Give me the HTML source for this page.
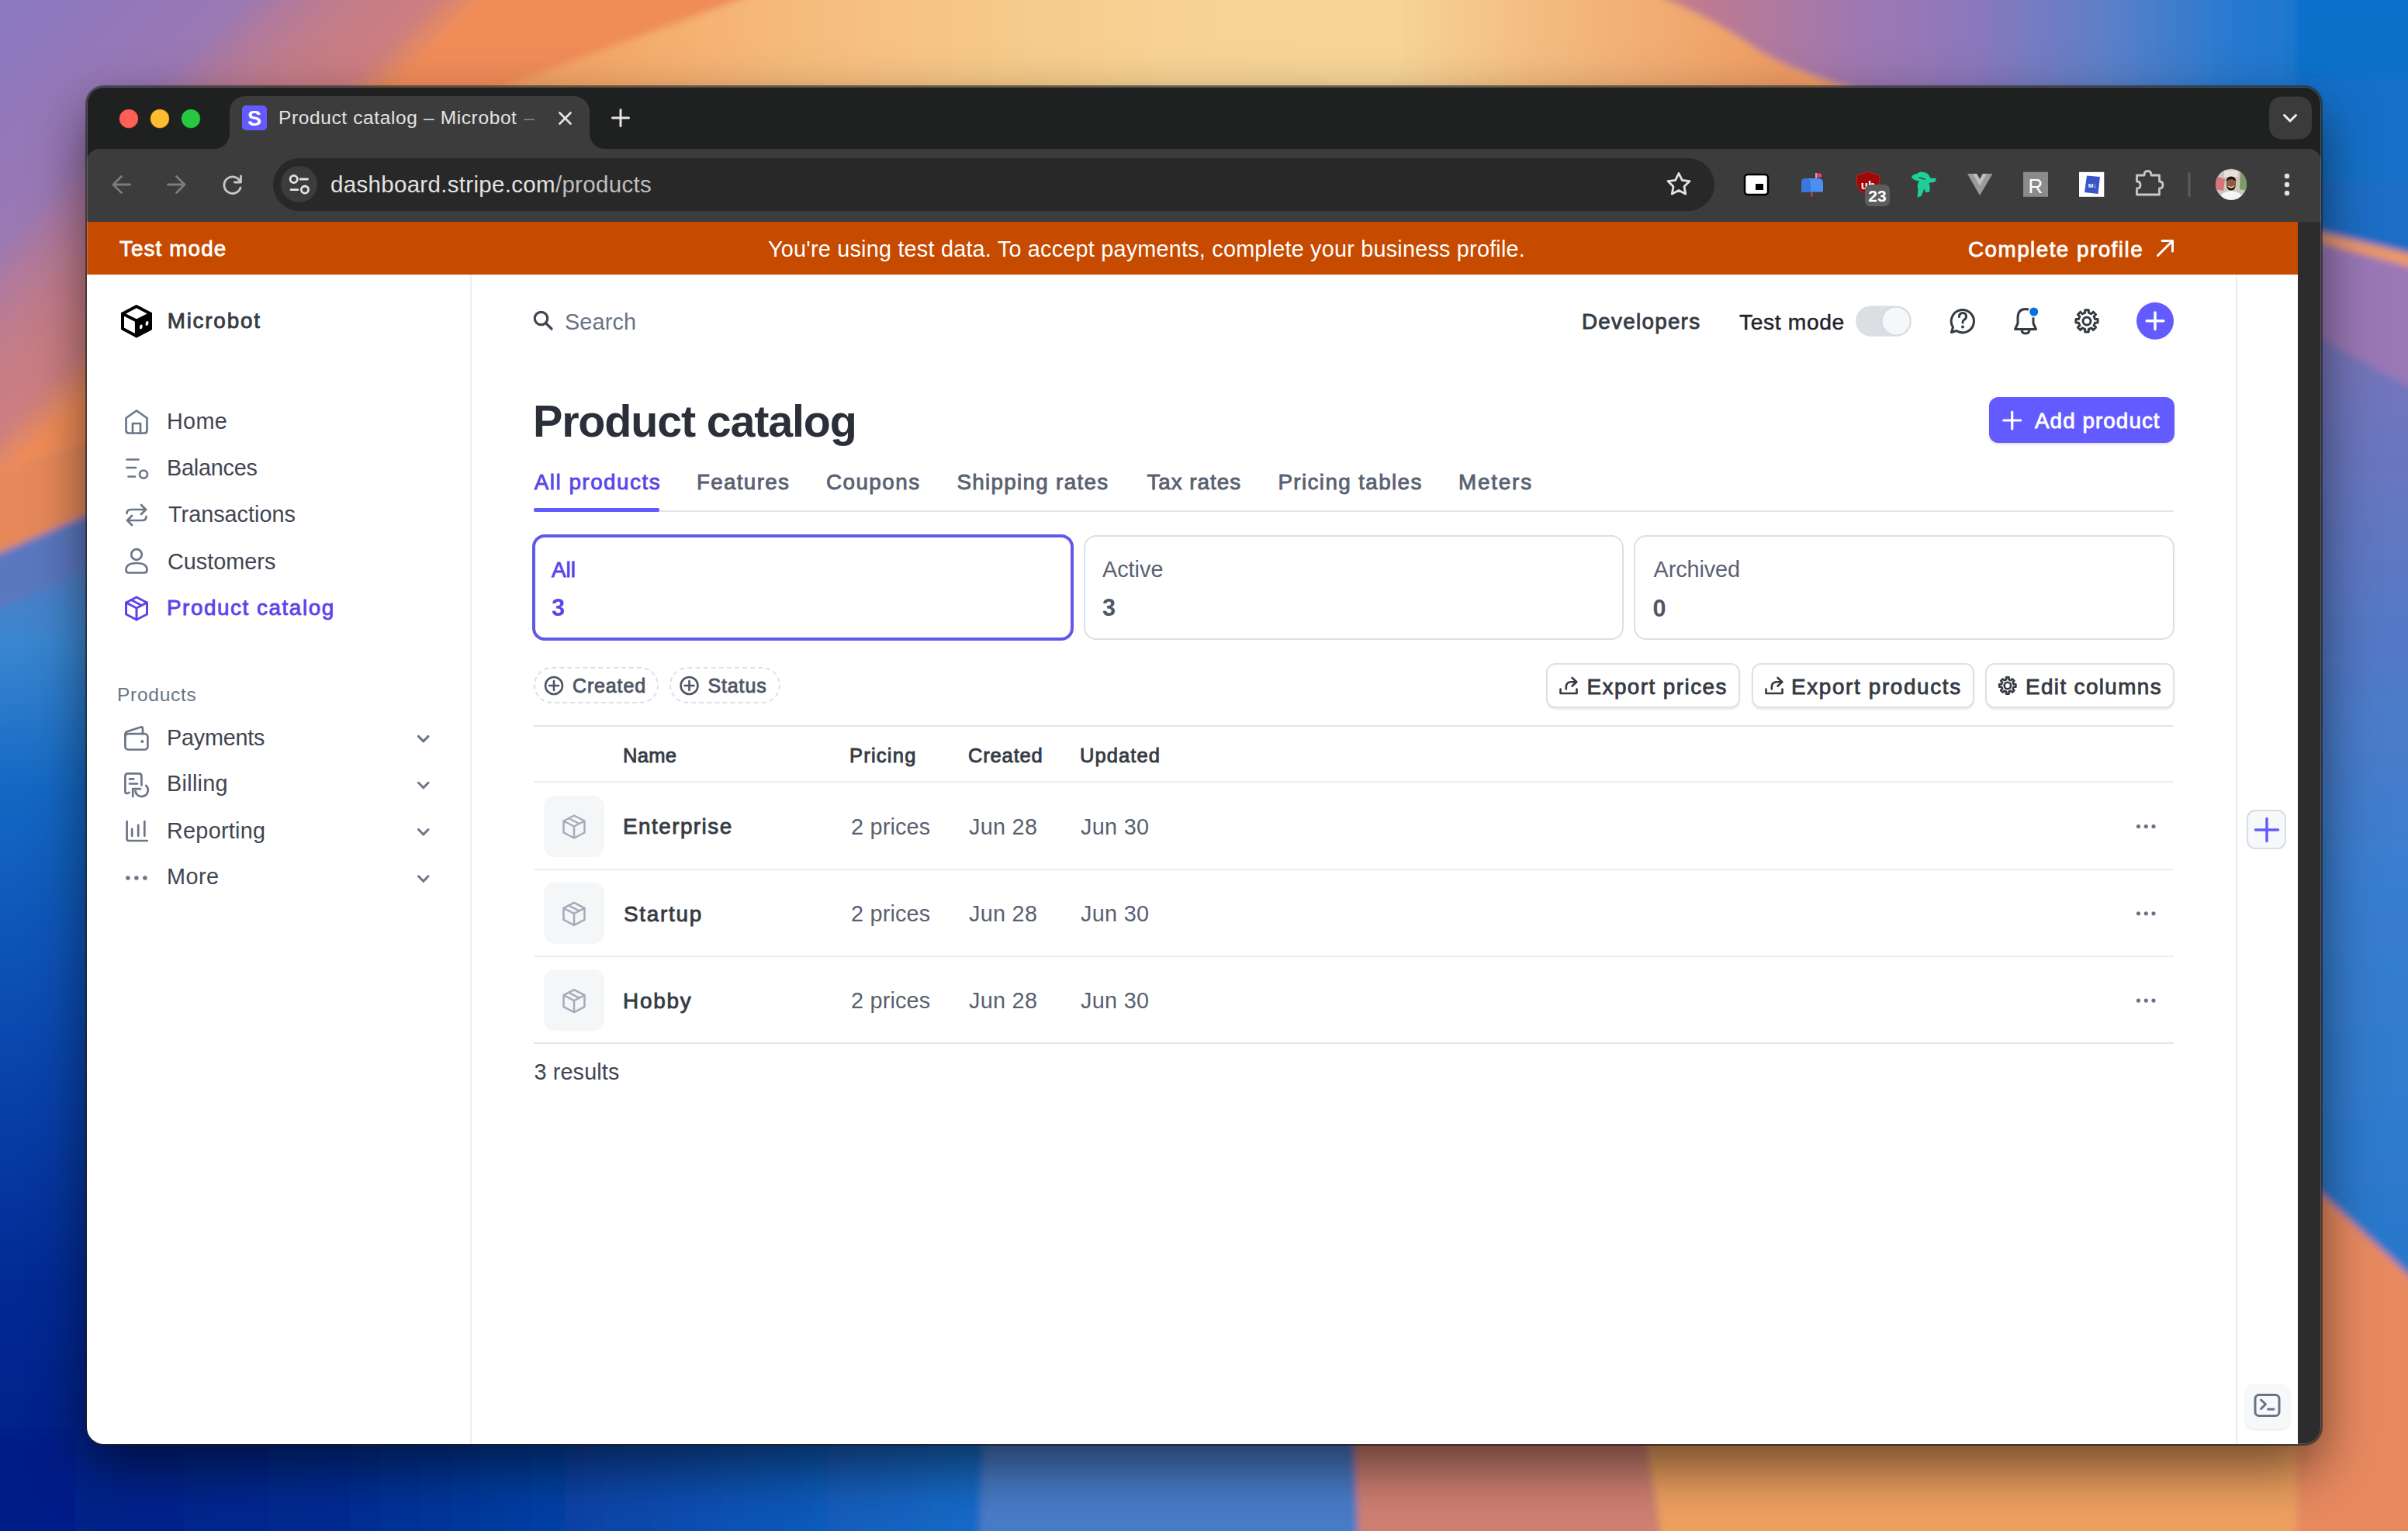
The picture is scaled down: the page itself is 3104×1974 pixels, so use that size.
<!DOCTYPE html>
<html><head><meta charset="utf-8"><title>Product catalog – Microbot</title>
<style>
html,body{margin:0;padding:0;width:3104px;height:1974px;overflow:hidden;font-family:"Liberation Sans",sans-serif;}
body{position:relative;background:#1a50b0;}
.a{position:absolute;}
.t{position:absolute;white-space:nowrap;line-height:1;font-family:"Liberation Sans",sans-serif;}
svg{position:absolute;overflow:visible;}
</style></head><body>
<!-- wallpaper -->
<svg width="3104" height="1974" viewBox="0 0 3104 1974" style="left:0;top:0;">
<defs>
 <linearGradient id="gTop" x1="0" y1="0" x2="2300" y2="0" gradientUnits="userSpaceOnUse">
  <stop offset="0" stop-color="#8878c0"/><stop offset="0.26" stop-color="#f29c62"/><stop offset="0.35" stop-color="#f4aa6c"/>
  <stop offset="0.45" stop-color="#f5bc7c"/><stop offset="0.55" stop-color="#f6c888"/><stop offset="0.65" stop-color="#f7d294"/>
  <stop offset="0.78" stop-color="#f7d598"/><stop offset="0.86" stop-color="#f4bc80"/><stop offset="1" stop-color="#ee9c62"/>
 </linearGradient>
 <linearGradient id="gTopR" x1="2150" y1="0" x2="3104" y2="0" gradientUnits="userSpaceOnUse">
  <stop offset="0" stop-color="#c47a88"/><stop offset="0.25" stop-color="#a078b0"/><stop offset="0.42" stop-color="#8a78bc"/>
  <stop offset="0.6" stop-color="#5a80c8"/><stop offset="0.75" stop-color="#2a7ad0"/><stop offset="1" stop-color="#0a70cc"/>
 </linearGradient>
 <linearGradient id="gLeftBlue" x1="0" y1="700" x2="0" y2="1974" gradientUnits="userSpaceOnUse">
  <stop offset="0" stop-color="#5a7cc4"/><stop offset="0.1" stop-color="#3a86d0"/><stop offset="0.25" stop-color="#1468c4"/>
  <stop offset="0.5" stop-color="#0a48b0"/><stop offset="0.75" stop-color="#022a94"/><stop offset="1" stop-color="#001c84"/>
 </linearGradient>
 <linearGradient id="gBot" x1="0" y1="0" x2="1270" y2="0" gradientUnits="userSpaceOnUse">
  <stop offset="0" stop-color="#001c86"/><stop offset="0.35" stop-color="#002c92"/><stop offset="0.7" stop-color="#0a4eb0"/><stop offset="1" stop-color="#1a6cc8"/>
 </linearGradient>
 <linearGradient id="gRightBlue" x1="0" y1="400" x2="0" y2="1600" gradientUnits="userSpaceOnUse">
  <stop offset="0" stop-color="#7a74b8"/><stop offset="0.3" stop-color="#5a78c4"/><stop offset="0.6" stop-color="#3a7ed0"/><stop offset="1" stop-color="#2a78cc"/>
 </linearGradient>
 <linearGradient id="gTL" x1="0" y1="0" x2="310" y2="310" gradientUnits="userSpaceOnUse">
  <stop offset="0" stop-color="#8a78c0"/><stop offset="0.5" stop-color="#9a78b4"/><stop offset="0.62" stop-color="#b47a9a"/>
  <stop offset="0.75" stop-color="#c47c88"/><stop offset="0.9" stop-color="#cc7e80"/><stop offset="0.96" stop-color="#e08868"/><stop offset="1" stop-color="#f08c58"/>
 </linearGradient>
 <linearGradient id="gRT" x1="0" y1="0" x2="0" y2="330" gradientUnits="userSpaceOnUse">
  <stop offset="0" stop-color="#0a70cc"/><stop offset="0.5" stop-color="#1670c8"/><stop offset="1" stop-color="#1e6cc4"/>
 </linearGradient>
 <filter id="soft" x="-2%" y="-2%" width="104%" height="104%"><feGaussianBlur stdDeviation="5"/></filter>
</defs>
<rect x="0" y="0" width="3104" height="1974" fill="url(#gLeftBlue)"/>
<g filter="url(#soft)">
<!-- top -->
<rect x="-40" y="-40" width="3184" height="170" fill="url(#gTop)"/>
<path d="M2100 -40 H3144 V130 H2440 Q2300 90 2260 60 Q2200 20 2150 0 Q2120 -20 2100 -40 Z" fill="url(#gTopR)"/>
<!-- left band -->
<path d="M-40 -40 H1060 L600 130 H140 V562 L-40 622 Z" fill="url(#gTL)"/>
<path d="M-40 622 L140 562 V652 L-40 730 Z" fill="#e6885a"/>
<path d="M-40 730 L140 652 V720 L-40 805 Z" fill="#5a78c0"/>
<!-- right band -->
<path d="M2960 -40 H3144 V340 L2960 292 Z" fill="url(#gRT)"/>
<path d="M2960 292 L3144 336 V354 L2960 305 Z" fill="#f09a60"/>
<path d="M2960 305 L3144 354 V520 L2960 420 Z" fill="#9a78b6"/>
<path d="M2960 420 L3144 520 V1680 L2960 1509 Z" fill="url(#gRightBlue)"/>
<path d="M2960 1509 L3144 1680 V2014 H2960 Z" fill="#e88a60"/>
<!-- bottom band -->
<path d="M-40 1850 H1268 L1260 2014 H-40 Z" fill="url(#gBot)"/>
<path d="M1268 1850 H1745 L1752 2014 H1260 Z" fill="#4a7cc8"/>
<path d="M1745 1850 H2120 L2146 2014 H1752 Z" fill="#d08072"/>
<path d="M2120 1850 H2960 V2014 H2146 Z" fill="#eea060"/>
</g>
</svg>

<!-- window -->
<div class="a" style="left:112px;top:112px;width:2880px;height:1750px;border-radius:22px;box-shadow:0 30px 70px rgba(0,0,0,0.55),0 0 0 2px rgba(40,40,40,0.6);background:#2c2c2c;overflow:hidden;">
  <!-- tab strip -->
  <div class="a" style="left:0;top:0;width:2880px;height:110px;background:#1f2020;"></div>
  <!-- toolbar -->
  <div class="a" style="left:0;top:80px;width:2880px;height:94px;background:#3c3c3c;border-radius:16px 16px 0 0;"></div>
  <!-- active tab flares -->
  <div class="a" style="left:164px;top:60px;width:20px;height:20px;background:#3c3c3c;"></div>
  <div class="a" style="left:144px;top:40px;width:40px;height:40px;background:#1f2020;border-radius:0 0 20px 0;"></div>
  <div class="a" style="left:648px;top:60px;width:20px;height:20px;background:#3c3c3c;"></div>
  <div class="a" style="left:648px;top:40px;width:40px;height:40px;background:#1f2020;border-radius:0 0 0 20px;"></div>
  <!-- active tab -->
  <div class="a" style="left:184px;top:12px;width:464px;height:80px;background:#3c3c3c;border-radius:20px 20px 0 0;"></div>
  <!-- banner -->
  <div class="a" style="left:0;top:174px;width:2850px;height:68px;background:#c64a00;"></div>
  <!-- page -->
  <div class="a" style="left:0;top:242px;width:2850px;height:1508px;background:#ffffff;"></div>
  <!-- dark right strip -->
  <div class="a" style="left:2850px;top:174px;width:30px;height:1576px;background:#2c2c2c;"></div>
</div>
<div class="a" style="left:112px;top:112px;width:2880px;height:1750px;box-sizing:border-box;border-radius:22px;border:1px solid rgba(255,255,255,0.22);pointer-events:none;"></div>
<!-- omnibox -->
<div class="a" style="left:352px;top:204px;width:1858px;height:68px;border-radius:34px;background:#282828;"></div>
<div class="a" style="left:362px;top:214px;width:47px;height:47px;border-radius:50%;background:#3c3c3c;"></div>
<!-- sidebar border -->
<div class="a" style="left:606px;top:354px;width:2px;height:1508px;background:#ebeef1;"></div>
<!-- right panel border -->
<div class="a" style="left:2882px;top:354px;width:2px;height:1508px;background:#ebeef1;"></div>
<!-- tabs line -->
<div class="a" style="left:688px;top:658px;width:2114px;height:2px;background:#e2e4e8;"></div>
<div class="a" style="left:688px;top:655px;width:162px;height:5px;background:#635bff;border-radius:2px;"></div>
<!-- cards -->
<div class="a" style="left:686px;top:689px;width:698px;height:137px;box-sizing:border-box;border:4px solid #5f58e8;border-radius:16px;"></div>
<div class="a" style="left:1397px;top:690px;width:696px;height:135px;box-sizing:border-box;border:2px solid #dcdfe3;border-radius:16px;"></div>
<div class="a" style="left:2106px;top:690px;width:697px;height:135px;box-sizing:border-box;border:2px solid #dcdfe3;border-radius:16px;"></div>
<!-- pills -->
<div class="a" style="left:688px;top:860px;width:161px;height:47px;box-sizing:border-box;border:2px dashed #dde1e6;border-radius:24px;"></div>
<div class="a" style="left:863px;top:860px;width:143px;height:47px;box-sizing:border-box;border:2px dashed #dde1e6;border-radius:24px;"></div>
<!-- buttons -->
<div class="a" style="left:1993px;top:855px;width:250px;height:58px;box-sizing:border-box;border:2px solid #dde1e6;border-radius:12px;box-shadow:0 2px 2px rgba(0,0,0,0.08);"></div>
<div class="a" style="left:2258px;top:855px;width:287px;height:58px;box-sizing:border-box;border:2px solid #dde1e6;border-radius:12px;box-shadow:0 2px 2px rgba(0,0,0,0.08);"></div>
<div class="a" style="left:2559px;top:855px;width:244px;height:58px;box-sizing:border-box;border:2px solid #dde1e6;border-radius:12px;box-shadow:0 2px 2px rgba(0,0,0,0.08);"></div>
<div class="a" style="left:2564px;top:512px;width:239px;height:59px;background:#635bff;border-radius:12px;box-shadow:0 2px 3px rgba(0,0,0,0.12);"></div>
<!-- table lines -->
<div class="a" style="left:688px;top:935px;width:2114px;height:2px;background:#e2e4e8;"></div>
<div class="a" style="left:688px;top:1007px;width:2114px;height:2px;background:#eceef1;"></div>
<div class="a" style="left:688px;top:1120px;width:2114px;height:2px;background:#ebeef1;"></div>
<div class="a" style="left:688px;top:1232px;width:2114px;height:2px;background:#ebeef1;"></div>
<div class="a" style="left:688px;top:1344px;width:2114px;height:2px;background:#e2e4e8;"></div>
<!-- thumbnails -->
<div class="a" style="left:701px;top:1026px;width:78px;height:79px;background:#f5f6f8;border-radius:14px;"></div>
<div class="a" style="left:701px;top:1138px;width:78px;height:79px;background:#f5f6f8;border-radius:14px;"></div>
<div class="a" style="left:701px;top:1250px;width:78px;height:79px;background:#f5f6f8;border-radius:14px;"></div>
<!-- right panel buttons -->
<div class="a" style="left:2896px;top:1044px;width:51px;height:51px;box-sizing:border-box;background:#f6f8fa;border:2px solid #d8dee4;border-radius:11px;"></div>
<div class="a" style="left:2894px;top:1784px;width:58px;height:58px;background:#f6f8fa;border-radius:12px;box-shadow:0 2px 3px rgba(0,0,0,0.08);"></div>
<svg width="3104" height="1974" viewBox="0 0 3104 1974" style="left:0;top:0;" fill="none" stroke-linecap="round" stroke-linejoin="round">
<!-- traffic lights -->
<circle cx="166" cy="153" r="12.3" fill="#ff5f57" stroke="rgba(0,0,0,0.25)" stroke-width="1"/>
<circle cx="206" cy="153" r="12.3" fill="#febc2e" stroke="rgba(0,0,0,0.25)" stroke-width="1"/>
<circle cx="246" cy="153" r="12.3" fill="#28c840" stroke="rgba(0,0,0,0.25)" stroke-width="1"/>
<!-- favicon -->
<rect x="312" y="136" width="32" height="32" rx="5" fill="#635bff"/>
<text x="328" y="162" font-family="Liberation Sans" font-weight="bold" font-size="27" fill="#fff" text-anchor="middle">S</text>
<!-- tab close, new tab -->
<path d="M721.5 145.5 L735.5 159.5 M735.5 145.5 L721.5 159.5" stroke="#e3e3e3" stroke-width="2.8"/>
<path d="M800 141.5 V162.5 M789.5 152 H810.5" stroke="#e3e3e3" stroke-width="3"/>
<!-- tab strip chevron button -->
<rect x="2925" y="124.5" width="55" height="55" rx="16" fill="#3b3b3b"/>
<path d="M2944.5 148.5 L2952 156 L2959.5 148.5" stroke="#f0f0f0" stroke-width="3"/>
<!-- back / fwd / reload -->
<path d="M167.5 238 H146 M156.5 227.5 L146 238 L156.5 248.5" stroke="#7c7c7c" stroke-width="2.8"/>
<path d="M216.5 238 H238 M227.5 227.5 L238 238 L227.5 248.5" stroke="#7c7c7c" stroke-width="2.8"/>
<path d="M309.5 234 A10.8 10.8 0 1 0 310 242" stroke="#c7c7c7" stroke-width="2.8"/>
<path d="M310.5 227 V235 H302.5" stroke="#c7c7c7" stroke-width="2.8"/>
<!-- site info tune icon -->
<circle cx="378.7" cy="231" r="4.6" stroke="#e3e3e3" stroke-width="2.8"/>
<path d="M387 231 H396.5 M375 244.6 H384" stroke="#e3e3e3" stroke-width="2.8"/>
<circle cx="393" cy="244.6" r="4.6" stroke="#e3e3e3" stroke-width="2.8"/>
<!-- star -->
<path d="M2164 223.5 L2168.3 232.3 L2178 233.6 L2171 240.4 L2172.7 250 L2164 245.4 L2155.3 250 L2157 240.4 L2150 233.6 L2159.7 232.3 Z" stroke="#e3e3e3" stroke-width="2.8"/>
<!-- PiP -->
<rect x="2249" y="225" width="30" height="26" rx="4" fill="#fff" stroke="#000" stroke-width="2.5"/>
<rect x="2263" y="237" width="10" height="8" fill="#000"/>
<!-- mailbox -->
<rect x="2340" y="223" width="2.2" height="12" fill="#c8a0b0"/>
<rect x="2342" y="223.5" width="6" height="5" fill="#e8407a"/>
<path d="M2322 247.5 V236 Q2322 230 2328 230 H2344 Q2350 230 2350 236 V247.5 Z" fill="#4a90f0"/>
<path d="M2322 247.5 V236 Q2322 230 2328 230 Q2334 230 2334 236 V247.5 Z" fill="#3a78e0"/>
<rect x="2334.5" y="248" width="2" height="5.5" fill="#d04070"/>
<!-- uBlock -->
<path d="M2408 221.5 L2422.5 226.5 V236 Q2422.5 246 2408 251 Q2393.5 246 2393.5 236 V226.5 Z" fill="#a00808" stroke="#c02020" stroke-width="1"/>
<text x="2408" y="244" font-family="Liberation Sans" font-weight="bold" font-size="15" fill="#fff" text-anchor="middle">ub</text>
<rect x="2404" y="238" width="32" height="28" rx="7" fill="#5e5e5e"/>
<text x="2420" y="260" font-family="Liberation Sans" font-weight="bold" font-size="21" fill="#fff" text-anchor="middle">23</text>
<!-- green dino -->
<path d="M2464 229 Q2465 224.5 2471 224 L2475 221.5 L2482 222.5 Q2487 224.5 2488 229.5 L2496 230 L2494.5 234.5 L2486.5 236 Q2488.5 242 2487 247.5 L2482 248 L2480.5 243 L2476.5 253 L2471.5 254.5 L2472.5 244 Q2470.5 238 2474 233.5 Q2468 233 2464 229 Z" fill="#1fcf98"/>
<path d="M2474 229 L2481 231" stroke="#3c3c3c" stroke-width="1.5"/>
<!-- V -->
<path d="M2536 224 H2548 L2552 231 L2556 224 H2568.5 L2552 252 Z" fill="#9a9a9a"/>
<path d="M2543 224 H2548 L2552 231 L2556 224 H2561 L2552 239.5 Z" fill="#c0c0c0"/>
<!-- R -->
<rect x="2608" y="221.8" width="32" height="32" fill="#8b8b8b"/>
<text x="2624" y="249" font-family="Liberation Sans" font-size="26" fill="#fff" text-anchor="middle">R</text>
<!-- M down -->
<rect x="2680" y="221.8" width="32.3" height="32" fill="#fff"/>
<path d="M2690 226.5 L2707 228 L2704.5 250 L2687 248 Z" fill="#3a55c8"/>
<text x="2697" y="242" font-family="Liberation Sans" font-weight="bold" font-size="8" fill="#fff" text-anchor="middle">M↓</text>
<!-- puzzle -->
<path d="M2754.5 226 H2764 Q2764 220.5 2768.5 220.5 Q2773 220.5 2773 226 H2783.5 V234 Q2788 234 2788 238.5 Q2788 243 2783.5 243 V251 H2754.5 V243 Q2759 243 2759 238.5 Q2759 234 2754.5 234 Z" stroke="#c7c7c7" stroke-width="2.8"/>
<!-- separator -->
<rect x="2820.5" y="222" width="3" height="32" rx="1.5" fill="#5c5c5c"/>
<!-- avatar -->
<defs><clipPath id="avc"><circle cx="2876" cy="237.7" r="20"/></clipPath></defs>
<g clip-path="url(#avc)">
<rect x="2856" y="217" width="40" height="41" fill="#cfc6bb"/>
<path d="M2855 226 L2868 231 L2866 246 L2855 244 Z" fill="#d9737a"/>
<path d="M2888 222 L2897 224 L2897 246 L2887 244 Z" fill="#7d9a6a"/>
<rect x="2867" y="220" width="18" height="8" fill="#e8e2d8"/>
<path d="M2860 258 Q2862 247 2876 246 Q2890 247 2893 258 Z" fill="#f4f4f4"/>
<ellipse cx="2876" cy="237" rx="6.2" ry="8" fill="#8e5b3e"/>
<path d="M2869.5 234 Q2870 227.5 2876 227.5 Q2882 227.5 2882.5 234 Q2879 231 2876 231 Q2873 231 2869.5 234 Z" fill="#1e1410"/>
<path d="M2870.5 240 Q2871 245.5 2876 245.5 Q2881 245.5 2881.5 240 Q2878 243 2876 243 Q2874 243 2870.5 240 Z" fill="#2a1a12"/>
<path d="M2873 240.5 Q2876 242.5 2879 240.5" stroke="#fff" stroke-width="1.2"/>
</g>
<!-- kebab -->
<circle cx="2948" cy="227" r="3.2" fill="#e3e3e3"/><circle cx="2948" cy="238" r="3.2" fill="#e3e3e3"/><circle cx="2948" cy="249" r="3.2" fill="#e3e3e3"/>
<!-- banner arrow -->
<path d="M2781.5 329.5 L2800.5 310.5 M2787 310.5 H2800.5 V324" stroke="#fff" stroke-width="3"/>

<!-- Microbot logo -->
<path d="M175.9 395 L194 404.5 V423.8 L175.9 433.3 L158 423.8 V404.5 Z" fill="#fff" stroke="#000" stroke-width="4"/>
<path d="M175.9 413.5 L194 404.5 V423.8 L175.9 433.3 Z" fill="#000" stroke="#000" stroke-width="4"/>
<path d="M158 404.5 L175.9 413.5" stroke="#000" stroke-width="4"/>
<ellipse cx="181.8" cy="421.5" rx="1.8" ry="3" fill="#fff" transform="rotate(15 181.8 421.5)"/>
<ellipse cx="189.5" cy="417" rx="1.8" ry="3" fill="#fff" transform="rotate(15 189.5 417)"/>

<!-- sidebar icons -->
<g stroke="#6c7688" stroke-width="2.7">
 <path d="M162.5 539 L176 529.5 L189.5 539 V555 Q189.5 558.5 186 558.5 H166 Q162.5 558.5 162.5 555 Z"/>
 <path d="M171 558.5 V546 H181 V558.5"/>
 <path d="M163.5 592.5 H178.5 M163.5 603 H175 M165.5 614.5 H174"/>
 <circle cx="185" cy="611.5" r="5"/>
 <path d="M163.5 662 Q163.5 657 169 657 H188 M182 651 L188 657 L182 663"/>
 <path d="M188.5 666 Q188.5 671 183 671 H164 M170 665 L164 671 L170 677"/>
 <circle cx="176" cy="715" r="6.8"/>
 <path d="M162.5 735 Q162.5 726 176 726 Q189.5 726 189.5 735 Q189.5 738.5 186 738.5 H166 Q162.5 738.5 162.5 735 Z"/>
 <path d="M161.4 950 V947 Q161.4 944 164.5 943 L181.5 937.5 Q184 936.8 184 939.5 V946.2"/>
 <rect x="161.4" y="946.2" width="29" height="20.3" rx="4"/>
 <path d="M182.4 1012.5 V1000.8 Q182.4 997.4 179 997.4 H164.8 Q161.4 997.4 161.4 1000.8 V1020.5 Q161.4 1024 165 1022.5 L166.5 1021.8 M167 1004.4 H172.2 M167 1010.5 H177.1"/>
 <path d="M188.2 1012.8 A8.2 8.2 0 1 1 174.5 1020 M181 1017.2 H171.2 V1027"/>
 <path d="M163.6 1059 V1081.5 Q163.6 1084 166 1084 H189.7 M170.2 1068.8 V1077.8 M178.2 1063.8 V1077.8 M186.3 1059 V1077.8"/>
 <path d="M539.5 949.4 L545.8 955.9 L552 949.4 M539.5 1009.3 L545.8 1015.8 L552 1009.3 M539.5 1069.5 L545.8 1076.0 L552 1069.5 M539.5 1129.8 L545.8 1136.3 L552 1129.8" stroke-width="3"/>
</g>
<circle cx="183.3" cy="956" r="2" fill="#6c7688"/>
<circle cx="164.9" cy="1132" r="2.8" fill="#6c7688"/><circle cx="175.9" cy="1132" r="2.8" fill="#6c7688"/><circle cx="186.9" cy="1132" r="2.8" fill="#6c7688"/>
<!-- product catalog purple cube -->
<g stroke="#5b45e8" stroke-width="3">
 <path d="M176 770 L189.5 777 V792 L176 799 L162.5 792 V777 Z"/>
 <path d="M162.5 777 L176 784 L189.5 777 M176 784 V799 M169 773.5 L182.5 780.5"/>
</g>
<!-- search -->
<g stroke="#414552" stroke-width="3.2">
 <circle cx="697.5" cy="410.5" r="8.2"/>
 <path d="M703.5 416.5 L711 424"/>
</g>
<!-- toggle -->
<rect x="2392" y="394.3" width="72" height="39.5" rx="19.75" fill="#dbdfe4"/>
<circle cx="2444.2" cy="414" r="18.2" fill="#f6f7f9" stroke="#d2d7de" stroke-width="1.2"/>
<!-- help -->
<g stroke="#353a44" stroke-width="3">
 <path d="M2515.5 428.5 L2517.5 422 A14.6 14.6 0 1 1 2522 426.5 Z"/>
 <path d="M2525.5 408.5 Q2525.5 403.5 2530 403.5 Q2534.5 403.5 2534.5 408 Q2534.5 411 2531.5 412.5 Q2530 413.5 2530 416"/>
</g>
<circle cx="2530" cy="421.5" r="1.9" fill="#353a44"/>
<!-- bell -->
<g stroke="#353a44" stroke-width="3">
 <path d="M2597.5 424.5 H2624.5 L2621 417 V410 Q2621 398.5 2611 398.5 Q2601 398.5 2601 410 V417 Z"/>
 <path d="M2606 424.5 Q2606 430 2611 430 Q2616 430 2616 424.5"/>
</g>
<circle cx="2621.7" cy="402" r="6.5" fill="#0570de" stroke="#fff" stroke-width="2"/>
<!-- gear header -->
<g stroke="#353a44" stroke-width="3">
 <path id="gearp" d="M2687.6 403.3 L2687.7 399.7 L2692.3 399.7 L2692.4 403.3 L2695.8 404.7 L2698.3 402.2 L2701.6 405.5 L2699.1 408.0 L2700.5 411.4 L2704.1 411.5 L2704.1 416.1 L2700.5 416.2 L2699.1 419.6 L2701.6 422.1 L2698.3 425.4 L2695.8 422.9 L2692.4 424.3 L2692.3 427.9 L2687.7 427.9 L2687.6 424.3 L2684.2 422.9 L2681.7 425.4 L2678.4 422.1 L2680.9 419.6 L2679.5 416.2 L2675.9 416.1 L2675.9 411.5 L2679.5 411.4 L2680.9 408.0 L2678.4 405.5 L2681.7 402.2 L2684.2 404.7 Z"/>
 <circle cx="2690" cy="414" r="5"/>
</g>
<!-- plus circle -->
<circle cx="2778" cy="413.8" r="24" fill="#635bff"/>
<path d="M2778 403 V424.6 M2767.2 413.8 H2788.8" stroke="#fff" stroke-width="3.5"/>
<!-- add product plus -->
<path d="M2593.7 531 V553 M2582.7 542 H2604.7" stroke="#fff" stroke-width="3.2"/>
<!-- pill plus circles -->
<g stroke="#4f5666" stroke-width="2.6">
 <circle cx="714" cy="884" r="11"/><path d="M714 878 V890 M708 884 H720"/>
 <circle cx="888.5" cy="884" r="11"/><path d="M888.5 878 V890 M882.5 884 H894.5"/>
</g>
<!-- export icons -->
<g stroke="#353a44" stroke-width="2.6">
 <path d="M2011.5 888.5 V894 H2032.5 V888.5 M2018.8 888.5 V886 Q2018.8 879.3 2025.5 879.3 H2032 M2026.6 874 L2032.3 879.3 L2026.6 884.5"/>
 <path d="M2276.5 888.5 V894 H2297.5 V888.5 M2283.8 888.5 V886 Q2283.8 879.3 2290.5 879.3 H2297 M2291.6 874 L2297.3 879.3 L2291.6 884.5"/>
</g>
<!-- gear edit columns -->
<g stroke="#353a44" stroke-width="2.6">
 <path d="M2586.1 876.3 L2586.0 873.4 L2589.6 873.4 L2589.5 876.3 L2592.0 877.3 L2594.0 875.3 L2596.5 877.8 L2594.5 879.8 L2595.5 882.3 L2598.4 882.2 L2598.4 885.8 L2595.5 885.7 L2594.5 888.2 L2596.5 890.2 L2594.0 892.7 L2592.0 890.7 L2589.5 891.7 L2589.6 894.6 L2586.0 894.6 L2586.1 891.7 L2583.6 890.7 L2581.6 892.7 L2579.1 890.2 L2581.1 888.2 L2580.1 885.7 L2577.2 885.8 L2577.2 882.2 L2580.1 882.3 L2581.1 879.8 L2579.1 877.8 L2581.6 875.3 L2583.6 877.3 Z"/>
 <circle cx="2587.8" cy="884" r="4.2"/>
</g>
<!-- row cubes -->
<g stroke="#a3acb9" stroke-width="2.5">
 <path id="cb" d="M740 1051.5 L753.5 1058.5 V1073.5 L740 1080.5 L726.5 1073.5 V1058.5 Z M726.5 1058.5 L740 1065.5 L753.5 1058.5 M740 1065.5 V1080.5 M733 1055 L746.5 1062"/>
 <path d="M740 1163.8 L753.5 1170.8 V1185.8 L740 1192.8 L726.5 1185.8 V1170.8 Z M726.5 1170.8 L740 1177.8 L753.5 1170.8 M740 1177.8 V1192.8 M733 1167.3 L746.5 1174.3"/>
 <path d="M740 1276.1 L753.5 1283.1 V1298.1 L740 1305.1 L726.5 1298.1 V1283.1 Z M726.5 1283.1 L740 1290.1 L753.5 1283.1 M740 1290.1 V1305.1 M733 1279.6 L746.5 1286.6"/>
</g>
<!-- row ellipsis -->
<g fill="#687385">
 <circle cx="2756.5" cy="1065.5" r="2.6"/><circle cx="2766.3" cy="1065.5" r="2.6"/><circle cx="2776" cy="1065.5" r="2.6"/>
 <circle cx="2756.5" cy="1177.8" r="2.6"/><circle cx="2766.3" cy="1177.8" r="2.6"/><circle cx="2776" cy="1177.8" r="2.6"/>
 <circle cx="2756.5" cy="1290.1" r="2.6"/><circle cx="2766.3" cy="1290.1" r="2.6"/><circle cx="2776" cy="1290.1" r="2.6"/>
</g>
<!-- right panel plus -->
<path d="M2922 1055.5 V1084.5 M2907.5 1070 H2936.5" stroke="#635bff" stroke-width="3.5"/>
<!-- terminal -->
<rect x="2907" y="1798.5" width="31" height="27" rx="5" stroke="#687385" stroke-width="3"/>
<path d="M2914.5 1805 L2920.5 1810.5 L2914.5 1816.5 M2923.5 1817 H2931" stroke="#687385" stroke-width="3"/>
</svg>

<div class="t" style="left:359.0px;top:139.7px;font-size:24.5px;color:#e3e3e3;letter-spacing:0.62px;">Product catalog – Microbot</div>
<div class="t" style="left:675.0px;top:139.7px;font-size:24.5px;color:#8a8a8a;">–</div>
<div class="t" style="left:426.0px;top:223.0px;font-size:29.5px;color:#e3e3e3;letter-spacing:0.31px;">dashboard.stripe.com<span style="color:#bfbfbf">/products</span></div>
<div class="t" style="left:154.0px;top:306.9px;font-size:27.81px;color:#ffffff;-webkit-text-stroke:0.85px #ffffff;letter-spacing:1.12px;">Test mode</div>
<div class="t" style="left:990.0px;top:306.6px;font-size:28.8px;color:#ffffff;letter-spacing:0.22px;">You're using test data. To accept payments, complete your business profile.</div>
<div class="t" style="left:2537.0px;top:307.9px;font-size:27.81px;color:#ffffff;-webkit-text-stroke:0.85px #ffffff;letter-spacing:1.48px;">Complete profile</div>
<div class="t" style="left:215.7px;top:400.4px;font-size:27.81px;color:#353a44;-webkit-text-stroke:0.85px #353a44;letter-spacing:1.80px;">Microbot</div>
<div class="t" style="left:215.0px;top:529.1px;font-size:28.8px;color:#414552;letter-spacing:0.30px;">Home</div>
<div class="t" style="left:215.0px;top:588.6px;font-size:28.8px;color:#414552;letter-spacing:-0.22px;">Balances</div>
<div class="t" style="left:217.0px;top:648.6px;font-size:28.8px;color:#414552;letter-spacing:0.01px;">Transactions</div>
<div class="t" style="left:216.0px;top:709.6px;font-size:28.8px;color:#414552;letter-spacing:0.02px;">Customers</div>
<div class="t" style="left:215.0px;top:770.4px;font-size:27.81px;color:#5b45e8;-webkit-text-stroke:0.85px #5b45e8;letter-spacing:1.57px;">Product catalog</div>
<div class="t" style="left:151.0px;top:884.2px;font-size:24.5px;color:#687385;letter-spacing:0.74px;">Products</div>
<div class="t" style="left:215.0px;top:936.6px;font-size:28.8px;color:#414552;letter-spacing:-0.23px;">Payments</div>
<div class="t" style="left:215.0px;top:996.1px;font-size:28.8px;color:#414552;letter-spacing:0.30px;">Billing</div>
<div class="t" style="left:215.0px;top:1056.6px;font-size:28.8px;color:#414552;letter-spacing:0.27px;">Reporting</div>
<div class="t" style="left:215.0px;top:1116.1px;font-size:28.8px;color:#414552;letter-spacing:0.47px;">More</div>
<div class="t" style="left:728.0px;top:400.6px;font-size:28.8px;color:#687385;letter-spacing:0.15px;">Search</div>
<div class="t" style="left:2039.0px;top:401.0px;font-size:27.81px;color:#353a44;-webkit-text-stroke:0.85px #353a44;letter-spacing:1.27px;">Developers</div>
<div class="t" style="left:2242.0px;top:400.7px;font-size:28.22px;color:#1f232b;-webkit-text-stroke:0.5px #1f232b;letter-spacing:0.63px;">Test mode</div>
<div class="t" style="left:687.0px;top:515.3px;font-size:57.5px;color:#2b2f3a;font-weight:bold;letter-spacing:-1.19px;">Product catalog</div>
<div class="t" style="left:2623.0px;top:528.8px;font-size:27.81px;color:#ffffff;-webkit-text-stroke:0.85px #ffffff;letter-spacing:1.07px;">Add product</div>
<div class="t" style="left:688.7px;top:608.4px;font-size:27.81px;color:#5b45e8;-webkit-text-stroke:0.85px #5b45e8;letter-spacing:1.52px;">All products</div>
<div class="t" style="left:898.0px;top:608.4px;font-size:27.81px;color:#596171;-webkit-text-stroke:0.85px #596171;letter-spacing:1.31px;">Features</div>
<div class="t" style="left:1065.0px;top:608.4px;font-size:27.81px;color:#596171;-webkit-text-stroke:0.85px #596171;letter-spacing:1.46px;">Coupons</div>
<div class="t" style="left:1233.5px;top:608.4px;font-size:27.81px;color:#596171;-webkit-text-stroke:0.85px #596171;letter-spacing:1.30px;">Shipping rates</div>
<div class="t" style="left:1478.5px;top:608.4px;font-size:27.81px;color:#596171;-webkit-text-stroke:0.85px #596171;letter-spacing:0.97px;">Tax rates</div>
<div class="t" style="left:1647.4px;top:608.4px;font-size:27.81px;color:#596171;-webkit-text-stroke:0.85px #596171;letter-spacing:1.39px;">Pricing tables</div>
<div class="t" style="left:1880.0px;top:608.4px;font-size:27.81px;color:#596171;-webkit-text-stroke:0.85px #596171;letter-spacing:1.82px;">Meters</div>
<div class="t" style="left:711.0px;top:721.4px;font-size:27.81px;color:#5b45e8;-webkit-text-stroke:0.85px #5b45e8;">All</div>
<div class="t" style="left:711.0px;top:768.2px;font-size:30.5px;color:#5b45e8;font-weight:bold;">3</div>
<div class="t" style="left:1421.0px;top:720.1px;font-size:28.8px;color:#596171;">Active</div>
<div class="t" style="left:1421.0px;top:768.2px;font-size:30.5px;color:#4f5666;font-weight:bold;">3</div>
<div class="t" style="left:2131.5px;top:720.1px;font-size:28.8px;color:#596171;letter-spacing:-0.07px;">Archived</div>
<div class="t" style="left:2130.5px;top:768.7px;font-size:30.5px;color:#4f5666;font-weight:bold;">0</div>
<div class="t" style="left:738.0px;top:872.4px;font-size:25.01px;color:#4f5666;-webkit-text-stroke:0.85px #4f5666;letter-spacing:0.85px;">Created</div>
<div class="t" style="left:912.5px;top:872.4px;font-size:25.01px;color:#4f5666;-webkit-text-stroke:0.85px #4f5666;letter-spacing:0.86px;">Status</div>
<div class="t" style="left:2045.6px;top:871.8px;font-size:27.81px;color:#353a44;-webkit-text-stroke:0.85px #353a44;letter-spacing:1.46px;">Export prices</div>
<div class="t" style="left:2309.0px;top:871.8px;font-size:27.81px;color:#353a44;-webkit-text-stroke:0.85px #353a44;letter-spacing:1.67px;">Export products</div>
<div class="t" style="left:2611.0px;top:871.8px;font-size:27.81px;color:#353a44;-webkit-text-stroke:0.85px #353a44;letter-spacing:1.40px;">Edit columns</div>
<div class="t" style="left:803.0px;top:962.4px;font-size:25.51px;color:#353a44;-webkit-text-stroke:0.85px #353a44;letter-spacing:0.27px;">Name</div>
<div class="t" style="left:1095.0px;top:962.4px;font-size:25.51px;color:#353a44;-webkit-text-stroke:0.85px #353a44;letter-spacing:1.23px;">Pricing</div>
<div class="t" style="left:1248.0px;top:962.4px;font-size:25.51px;color:#353a44;-webkit-text-stroke:0.85px #353a44;letter-spacing:0.84px;">Created</div>
<div class="t" style="left:1392.0px;top:962.4px;font-size:25.51px;color:#353a44;-webkit-text-stroke:0.85px #353a44;letter-spacing:1.10px;">Updated</div>
<div class="t" style="left:803.0px;top:1052.4px;font-size:27.81px;color:#353a44;-webkit-text-stroke:0.85px #353a44;letter-spacing:1.49px;">Enterprise</div>
<div class="t" style="left:1097.0px;top:1051.6px;font-size:28.8px;color:#596171;letter-spacing:0.20px;">2 prices</div>
<div class="t" style="left:1249.0px;top:1051.6px;font-size:28.8px;color:#596171;letter-spacing:0.29px;">Jun 28</div>
<div class="t" style="left:1393.0px;top:1051.6px;font-size:28.8px;color:#596171;letter-spacing:0.31px;">Jun 30</div>
<div class="t" style="left:804.0px;top:1164.7px;font-size:27.81px;color:#353a44;-webkit-text-stroke:0.85px #353a44;letter-spacing:1.78px;">Startup</div>
<div class="t" style="left:1097.0px;top:1163.9px;font-size:28.8px;color:#596171;letter-spacing:0.20px;">2 prices</div>
<div class="t" style="left:1249.0px;top:1163.9px;font-size:28.8px;color:#596171;letter-spacing:0.29px;">Jun 28</div>
<div class="t" style="left:1393.0px;top:1163.9px;font-size:28.8px;color:#596171;letter-spacing:0.31px;">Jun 30</div>
<div class="t" style="left:803.0px;top:1277.0px;font-size:27.81px;color:#353a44;-webkit-text-stroke:0.85px #353a44;letter-spacing:1.82px;">Hobby</div>
<div class="t" style="left:1097.0px;top:1276.2px;font-size:28.8px;color:#596171;letter-spacing:0.20px;">2 prices</div>
<div class="t" style="left:1249.0px;top:1276.2px;font-size:28.8px;color:#596171;letter-spacing:0.29px;">Jun 28</div>
<div class="t" style="left:1393.0px;top:1276.2px;font-size:28.8px;color:#596171;letter-spacing:0.31px;">Jun 30</div>
<div class="t" style="left:688.4px;top:1367.6px;font-size:28.8px;color:#414552;letter-spacing:0.15px;">3 results</div>
</body></html>
